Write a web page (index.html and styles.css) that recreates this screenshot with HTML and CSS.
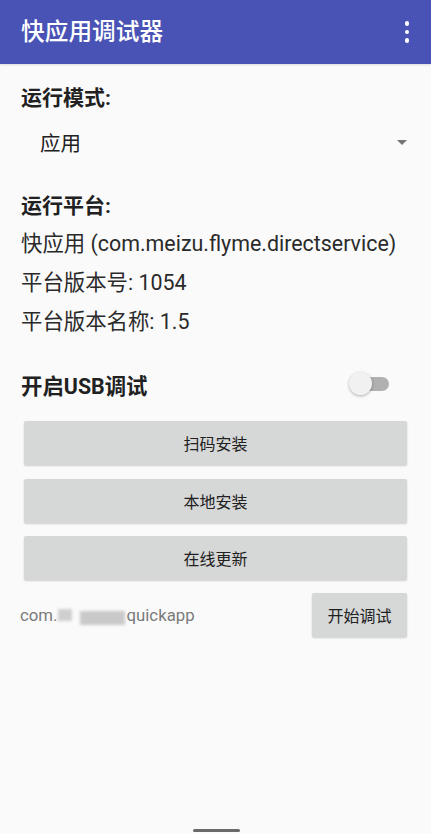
FILE: index.html
```html
<!DOCTYPE html>
<html lang="zh">
<head>
<meta charset="utf-8">
<title>快应用调试器</title>
<link rel="stylesheet" href="styles.css">
</head>
<body>
<header class="appbar">
  <h1 class="title">快应用调试器</h1>
  <div class="menu" aria-label="更多">
    <span class="dot"></span><span class="dot"></span><span class="dot"></span>
  </div>
</header>
<main class="content">
  <div class="label">运行模式:</div>
  <div class="spinner">
    <span class="spinner-text">应用</span>
    <span class="caret"></span>
  </div>
  <div class="label label-2">运行平台:</div>
  <div class="info">
    <div class="info-line">快应用 (com.meizu.flyme.directservice)</div>
    <div class="info-line">平台版本号: 1054</div>
    <div class="info-line">平台版本名称: 1.5</div>
  </div>
  <div class="usb-row">
    <span class="usb-label">开启USB调试</span>
    <span class="switch"><span class="track"></span><span class="thumb"></span></span>
  </div>
  <div class="buttons">
    <button class="btn">扫码安装</button>
    <button class="btn">本地安装</button>
    <button class="btn">在线更新</button>
  </div>
  <div class="debug-row">
    <span class="pkg">com.<span class="blur b1"></span><span class="blur b2"></span>quickapp</span>
    <button class="btn btn-small">开始调试</button>
  </div>
</main>
<div class="home-bar"></div>
</body>
</html>
```
FILE: styles.css
```css
* { box-sizing: border-box; }
html, body {
  margin: 0;
  padding: 0;
  background: #fafafa;
}
body {
  width: 431px;
  height: 834px;
  font-family: Roboto, "Noto Sans CJK SC", sans-serif;
  color: #212121;
  overflow: hidden;
}
.appbar {
  height: 64px;
  background: #4953b5;
  display: flex;
  align-items: center;
  justify-content: space-between;
  padding: 0 22px 0 21px;
  box-shadow: 0 1px 2px rgba(0,0,0,0.12);
}
.title {
  margin: 0;
  color: #ffffff;
  font-size: 23.7px;
  font-weight: 500;
  line-height: 30px;
  margin-top: -1px;
}
.menu {
  display: flex;
  flex-direction: column;
  align-items: center;
  gap: 4px;
}
.dot {
  width: 4.5px;
  height: 4.5px;
  border-radius: 50%;
  background: #ffffff;
}
.content {
  padding: 20px 24px 0 21px;
}
.label {
  font-size: 21px;
  font-weight: 700;
  line-height: 28px;
  color: #212121;
}
.spinner {
  height: 60px;
  display: flex;
  align-items: center;
  justify-content: space-between;
  padding: 0 0 0 19px;
}
.spinner-text {
  font-size: 20.5px;
  color: #212121;
}
.caret {
  width: 0;
  height: 0;
  border-left: 5.5px solid transparent;
  border-right: 5.5px solid transparent;
  border-top: 5.5px solid #757575;
}
.label-2 {
  margin-top: 20px;
}
.info {
  margin-top: 3.5px;
}
.info-line {
  font-size: 21.4px;
  line-height: 39px;
  color: #2a2a2a;
}
.usb-row {
  margin-top: 23.5px;
  height: 40px;
  display: flex;
  align-items: center;
  justify-content: space-between;
}
.usb-label {
  font-size: 21.4px;
  font-weight: 700;
  color: #212121;
}
.switch {
  position: relative;
  width: 40px;
  height: 24px;
  margin-right: 18px;
}
.track {
  position: absolute;
  left: 6px;
  right: 0;
  top: 5px;
  height: 14px;
  border-radius: 7px;
  background: #b0b0b0;
}
.thumb {
  position: absolute;
  left: 0;
  top: 0;
  width: 23px;
  height: 23px;
  border-radius: 50%;
  background: #f1f1f1;
  box-shadow: 0 1px 3px rgba(0,0,0,0.3);
}
.buttons {
  margin-top: 17px;
  padding-left: 3px;
  display: flex;
  flex-direction: column;
  gap: 13.5px;
}
.btn {
  height: 44px;
  border: none;
  border-radius: 2px;
  background: #d6d7d7;
  font-family: Roboto, "Noto Sans CJK SC", sans-serif;
  font-size: 16px;
  color: #212121;
  box-shadow: 0 1px 2px rgba(0,0,0,0.18);
  padding: 0;
}
.debug-row {
  margin-top: 13px;
  display: flex;
  align-items: center;
  justify-content: space-between;
  margin-left: -1px;
}
.pkg {
  font-size: 16.8px;
  color: #7a7a7a;
  display: inline-flex;
  align-items: center;
}
.blur {
  display: inline-block;
  filter: blur(1.5px);
}
.b1 {
  width: 14px;
  height: 12px;
  margin: 0 8px 0 0;
  background: #cfcfcf;
}
.b2 {
  width: 45px;
  height: 14px;
  margin-top: 6px;
  margin-right: 2px;
  background: #c9c9c9;
}
.btn-small {
  width: 95px;
}
.home-bar {
  position: fixed;
  left: 193px;
  top: 829px;
  width: 47px;
  height: 3px;
  border-radius: 2px;
  background: #6a6a6a;
}
```
